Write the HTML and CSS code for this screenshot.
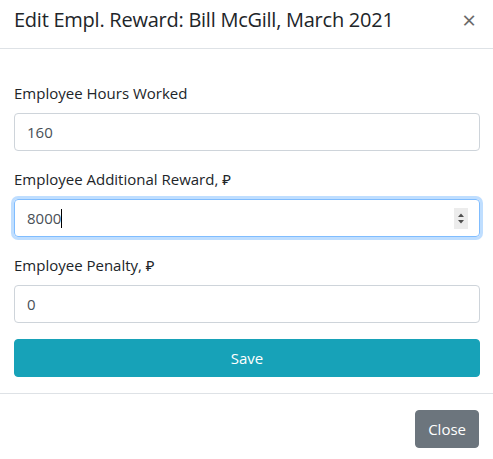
FILE: index.html
```html
<!DOCTYPE html>
<html>
<head>
<meta charset="utf-8">
<link rel="stylesheet" href="styles.css">
</head>
<body>
<div class="modal">
  <div class="modal-header">
    <h5 class="modal-title">Edit Empl. Reward: Bill McGill, March 2021</h5>
    <span class="close">×</span>
  </div>
  <div class="modal-body">
    <div class="form-group">
      <label class="label">Employee Hours Worked</label>
      <div class="input">160</div>
    </div>
    <div class="form-group">
      <label class="label">Employee Additional Reward, ₽</label>
      <div class="input focused"><span class="val">8000</span><span class="caret"></span>
        <span class="spinner"><svg width="14" height="21" viewBox="0 0 14 21"><path d="M4 9 L7 5.5 L10 9 Z" fill="#505050"/><path d="M4 12 L10 12 L7 15.5 Z" fill="#505050"/></svg></span>
      </div>
    </div>
    <div class="form-group">
      <label class="label">Employee Penalty, ₽</label>
      <div class="input">0</div>
    </div>
    <button class="btn btn-save">Save</button>
  </div>
  <div class="modal-footer">
    <button class="btn btn-close">Close</button>
  </div>
</div>
</body>
</html>
```
FILE: styles.css
```css
* { box-sizing: border-box; }
html, body { margin: 0; padding: 0; background: #fff; }
body {
  font-family: "Open Sans", "Noto Sans", sans-serif;
  color: #212529;
  font-size: 16px;
  line-height: 1.5;
}
.modal { width: 493px; height: 459px; background: #fff; }
.modal-header {
  display: flex;
  align-items: flex-start;
  justify-content: space-between;
  padding: 5px 14px 0 14px;
  height: 49px;
  border-bottom: 1px solid #dee2e6;
}
.modal-title {
  margin: 0;
  font-size: 20px;
  font-weight: 500;
  line-height: 1.5;
  letter-spacing: -0.25px;
}
.close {
  font-size: 24px;
  font-weight: 400;
  line-height: 1;
  color: #6a6a6a;
  margin-top: 3px;
  margin-right: 3px;
}
.modal-body {
  padding: 32px 13px 16px 14px;
}
.form-group { margin-bottom: 16px; }
.label {
  display: block;
  margin-bottom: 8px;
  font-size: 15px;
  line-height: 24px;
}
.input {
  height: 38px;
  display: flex;
  align-items: center;
  padding: 0 12px;
  border: 1px solid #ced4da;
  border-radius: 4px;
  color: #495057;
  font-size: 15px;
  position: relative;
}
.input.focused {
  border-color: #80bdff;
  box-shadow: 0 0 0 3px rgba(0,123,255,.25);
}
.caret {
  display: inline-block;
  width: 1px;
  height: 19px;
  background: #000;
}
.spinner {
  margin-left: auto;
  margin-right: -1px;
  width: 14px;
  height: 21px;
  background: #ececec;
  display: flex;
}
.btn {
  display: block;
  border: 1px solid transparent;
  border-radius: 4px;
  font-family: inherit;
  font-size: 15px;
  line-height: 24px;
  padding: 6px 12px;
  color: #fff;
}
.btn-save {
  width: 100%;
  background: #17a2b8;
  border-color: #17a2b8;
}
.modal-footer {
  display: flex;
  justify-content: flex-end;
  padding: 16px 14px 12px 14px;
  border-top: 1px solid #dee2e6;
}
.btn-close {
  background: #6c757d;
  border-color: #6c757d;
  height: 38px;
}
```
